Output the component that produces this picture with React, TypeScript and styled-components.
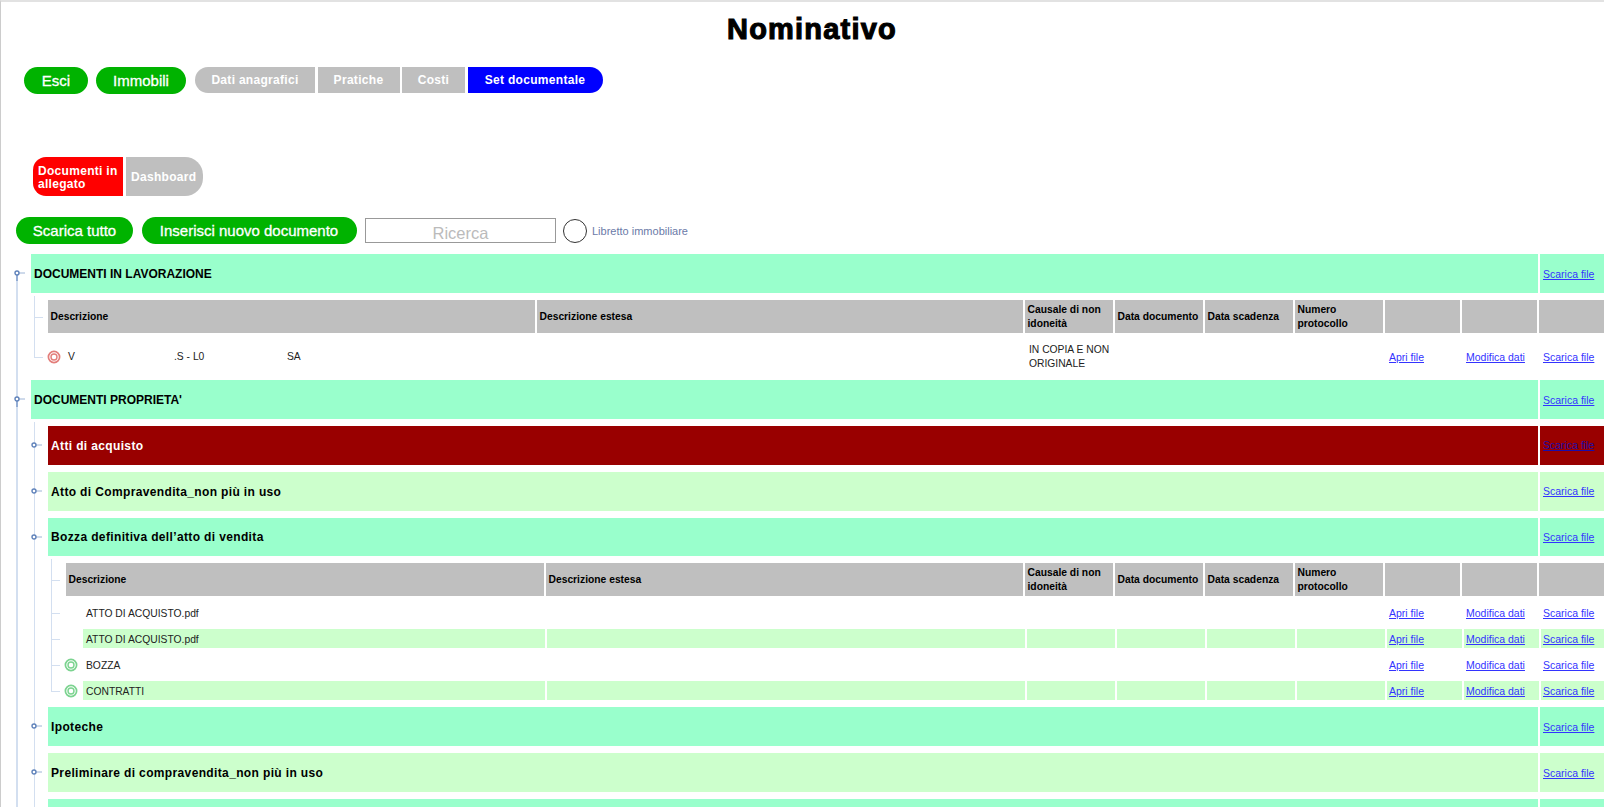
import styled, { createGlobalStyle } from "styled-components"

const GlobalStyles = createGlobalStyle`
  html, body {
    margin: 0;
    padding: 0;
    height: 807px;
    overflow: hidden;
    background: #ffffff;
    font-family: "Liberation Sans", Arial, sans-serif;
  }
  * {
    box-sizing: border-box;
  }
`

const LINE = "#d3dff0"

const Page = styled.div`
  height: 807px;
  overflow: hidden;
  border-left: 1px solid #cccccc;
  border-top: 2px solid #e2e2e2;
  position: relative;
`

const TopTab = styled.div`
  position: absolute;
  top: -2px;
  left: 503px;
  width: 146px;
  height: 2px;
  background: #ccffcc;
`

const Title = styled.h1`
  margin: 0;
  height: 65px;
  padding-top: 9px;
  padding-left: 19px;
  text-align: center;
  font-family: "Liberation Sans", Arial, sans-serif;
  font-size: 29px;
  line-height: 36px;
  font-weight: 700;
  letter-spacing: 1.2px;
  -webkit-text-stroke: 1.1px #000000;
  color: #000000;
`

const NavRow = styled.div`
  display: flex;
  align-items: flex-start;
  padding-left: 23px;
  height: 90px;
`

const GreenButton = styled.button<{ $w: number }>`
  width: ${p => p.$w}px;
  height: 27px;
  padding: 0;
  border: 0;
  border-radius: 14px;
  background: #00b300;
  color: #ffffff;
  font-family: "Liberation Sans", Arial, sans-serif;
  font-size: 15px;
  -webkit-text-stroke: 0.3px #ffffff;
  white-space: nowrap;
`

const NavGreen = styled(GreenButton)`
  margin-right: 8px;
`

const NavTabs = styled.div`
  display: flex;
  gap: 2.5px;
  margin-left: 1px;
`

const Tab = styled.div<{ $bg: string; $w: number; $first?: boolean; $last?: boolean }>`
  width: ${p => p.$w}px;
  height: 26px;
  display: flex;
  align-items: center;
  justify-content: center;
  background: ${p => p.$bg};
  color: #ffffff;
  font-size: 12px;
  font-weight: 700;
  letter-spacing: 0.3px;
  border-radius: ${p => (p.$first ? "13px 0 0 13px" : p.$last ? "0 13px 13px 0" : "0")};
`

const SubTabs = styled.div`
  display: flex;
  gap: 3px;
  padding-left: 32px;
  height: 60px;
`

const SubTab = styled.div<{ $bg: string; $w: number; $first?: boolean }>`
  width: ${p => p.$w}px;
  height: 39px;
  display: flex;
  align-items: center;
  padding: 2px 0 0 5px;
  background: ${p => p.$bg};
  color: #ffffff;
  font-size: 12px;
  line-height: 13px;
  font-weight: 700;
  letter-spacing: 0.3px;
  border-radius: ${p => (p.$first ? "13px 0 0 13px" : "0 18px 18px 0")};
`

const Toolbar = styled.div`
  display: flex;
  align-items: flex-start;
  padding-left: 15px;
  height: 37.4px;
`

const ToolButton = styled(GreenButton)`
  margin-right: 8.5px;
`

const Search = styled.div`
  width: 191px;
  height: 25px;
  margin-top: 1px;
  margin-right: 7px;
  border: 1px solid #999999;
  display: flex;
  align-items: center;
  justify-content: center;
  padding-top: 5px;
  color: #bbbbbb;
  font-size: 16.5px;
`

const RoundCheck = styled.span`
  width: 24px;
  height: 24px;
  margin-top: 2px;
  margin-right: 5px;
  border: 1px solid #333333;
  border-radius: 50%;
`

const CheckLabel = styled.span`
  margin-top: 7px;
  font-size: 11px;
  line-height: 14px;
  color: #6b7aa8;
`

const Tree = styled.div`
  display: flex;
  flex-direction: column;
  gap: 7px;
  position: relative;
  &::before {
    content: "";
    position: absolute;
    left: 15px;
    top: 20px;
    bottom: -40px;
    width: 2px;
    background: ${LINE};
  }
`

const Nested = styled.div<{ $left: number; $stop: number }>`
  display: flex;
  flex-direction: column;
  gap: 7px;
  position: relative;
  &::before {
    content: "";
    position: absolute;
    left: ${p => p.$left}px;
    top: -4px;
    bottom: ${p => p.$stop}px;
    width: 1px;
    background: ${LINE};
  }
`

const GroupRow = styled.div<{ $indent: number }>`
  display: flex;
  gap: 2px;
  height: 38.8px;
  flex: none;
  padding-left: ${p => p.$indent}px;
  position: relative;
`

const GroupTitle = styled.div<{ $bg: string; $light?: boolean; $big?: boolean }>`
  flex: 1;
  display: flex;
  align-items: center;
  padding: 1px 0 0 3px;
  background: ${p => p.$bg};
  color: ${p => (p.$light ? "#ffffff" : "#000000")};
  font-size: 12px;
  font-weight: 700;
  letter-spacing: ${p => (p.$big ? "0" : "0.36px")};
`

const GroupLink = styled.div<{ $bg: string }>`
  width: 64px;
  flex: none;
  display: flex;
  align-items: center;
  padding-left: 3px;
  background: ${p => p.$bg};
`

const FileLink = styled.a<{ $dark?: boolean }>`
  color: ${p => (p.$dark ? "#1a0dab" : "#3333ff")};
  text-decoration: underline;
  font-size: 10.5px;
  white-space: nowrap;
`

const Expander = styled.svg<{ $x: number }>`
  position: absolute;
  left: ${p => p.$x}px;
  top: 15px;
`

const Grid = styled.div<{ $cols: string; $h: number; $indent: number }>`
  display: grid;
  grid-template-columns: ${p => p.$cols};
  column-gap: 2px;
  height: ${p => p.$h}px;
  flex: none;
  margin-left: ${p => p.$indent}px;
  position: relative;
  font-size: 10.3px;
  color: #222222;
`

const HeadCell = styled.div`
  display: flex;
  align-items: center;
  padding: 0 2.5px;
  background: #bfbfbf;
  color: #000000;
  font-size: 10.3px;
  font-weight: 700;
  line-height: 14px;
`

const Cell = styled.div<{ $bg?: boolean; $pad?: number }>`
  display: flex;
  align-items: center;
  padding-left: ${p => p.$pad ?? 2}px;
  background: ${p => (p.$bg ? "#ccffcc" : "transparent")};
  line-height: 14px;
`

const TextCell = styled(Cell)`
  padding-top: 1.5px;
`

const NamePart = styled.span<{ $w: number }>`
  width: ${p => p.$w}px;
  flex: none;
`

const Tick = styled.span<{ $x: number }>`
  position: absolute;
  left: ${p => p.$x}px;
  top: 50%;
  width: 9px;
  height: 1px;
  background: ${LINE};
`

const RingIcon = styled.svg<{ $x: number }>`
  position: absolute;
  left: ${p => p.$x}px;
  top: 50%;
  margin-top: -7px;
`

const DocIcon = ({ color, x }: { color: string; x: number }) => (
  <RingIcon $x={x} width="14" height="14" viewBox="0 0 14 14">
    <circle cx="7" cy="7" r="5.6" fill="none" stroke={color} strokeWidth="1.7" opacity="0.75" />
    <circle cx="7" cy="7" r="3" fill="none" stroke={color} strokeWidth="1.4" opacity="0.75" />
  </RingIcon>
)

const Knob = ({ x, down }: { x: number; down?: boolean }) => (
  <Expander $x={x} width="12" height="12" viewBox="0 0 12 12">
    {down && <line x1="3" y1="5" x2="3" y2="12" stroke="#7f9ccb" strokeWidth="1.5" />}
    <line x1="5" y1="4" x2="11" y2="4" stroke="#9db4d6" />
    <circle cx="3" cy="4" r="2" fill="#ffffff" stroke="#5f82ba" strokeWidth="1.4" />
  </Expander>
)

const COLS_L1 = "487px 486px 88px 88px 88px 88px 75px 75px 65px"
const COLS_L2 = "478px 477px 88px 88px 88px 88px 75px 75px 65px"
const COLS_ROW = "16px 462px 478px 88px 88px 88px 88px 75px 75px 65px"

const HEADS = [
  "Descrizione",
  "Descrizione estesa",
  "Causale di non idoneità",
  "Data documento",
  "Data scadenza",
  "Numero protocollo",
  "",
  "",
  "",
]

const Header = ({ cols, indent, tick }: { cols: string; indent: number; tick: number }) => (
  <Grid $cols={cols} $h={33} $indent={indent}>
    <Tick $x={tick - indent} />
    {HEADS.map((h, i) => (
      <HeadCell key={i}>{h}</HeadCell>
    ))}
  </Grid>
)

const Links = ({ bg, pad }: { bg?: boolean; pad: number }) => (
  <>
    <Cell $bg={bg} $pad={pad}><FileLink href="#">Apri file</FileLink></Cell>
    <Cell $bg={bg} $pad={pad}><FileLink href="#">Modifica dati</FileLink></Cell>
    <Cell $bg={bg} $pad={pad}><FileLink href="#">Scarica file</FileLink></Cell>
  </>
)

const DocRow = ({ name, bg, icon }: { name: string; bg?: boolean; icon?: boolean }) => (
  <Grid $cols={COLS_ROW} $h={19} $indent={64}>
    <Tick $x={-14} />
    {icon && <DocIcon color="#4fc46a" x={-1} />}
    <Cell />
    <TextCell $bg={bg} $pad={3}>{name}</TextCell>
    <Cell $bg={bg} />
    <Cell $bg={bg} />
    <Cell $bg={bg} />
    <Cell $bg={bg} />
    <Cell $bg={bg} />
    <Links bg={bg} pad={2} />
  </Grid>
)

const Group = ({
  title,
  bg,
  indent,
  light,
  big,
  noLink,
}: {
  title?: string
  bg: string
  indent: number
  light?: boolean
  big?: boolean
  noLink?: boolean
}) => (
  <GroupRow $indent={indent}>
    <Knob x={big ? 13 : 30} down={big} />
    <GroupTitle $bg={bg} $light={light} $big={big}>{title}</GroupTitle>
    <GroupLink $bg={bg}>
      {!noLink && <FileLink href="#" $dark={light}>Scarica file</FileLink>}
    </GroupLink>
  </GroupRow>
)

export default function App() {
  return (
    <Page>
      <GlobalStyles />
      <TopTab />
      <Title>Nominativo</Title>
      <NavRow>
        <NavGreen $w={64}>Esci</NavGreen>
        <NavGreen $w={90}>Immobili</NavGreen>
        <NavTabs>
          <Tab $bg="#bfbfbf" $w={120} $first>Dati anagrafici</Tab>
          <Tab $bg="#bfbfbf" $w={82}>Pratiche</Tab>
          <Tab $bg="#bfbfbf" $w={63}>Costi</Tab>
          <Tab $bg="#0000ff" $w={135} $last>Set documentale</Tab>
        </NavTabs>
      </NavRow>
      <SubTabs>
        <SubTab $bg="#ff0000" $w={90} $first>Documenti in allegato</SubTab>
        <SubTab $bg="#bfbfbf" $w={77}>Dashboard</SubTab>
      </SubTabs>
      <Toolbar>
        <ToolButton $w={117}>Scarica tutto</ToolButton>
        <ToolButton $w={215}>Inserisci nuovo documento</ToolButton>
        <Search>Ricerca</Search>
        <RoundCheck />
        <CheckLabel>Libretto immobiliare</CheckLabel>
      </Toolbar>
      <Tree>
        <Group title="DOCUMENTI IN LAVORAZIONE" bg="#99ffcc" indent={30} big />
        <Nested $left={33} $stop={16}>
          <Header cols={COLS_L1} indent={47} tick={33} />
          <Grid $cols={COLS_L1} $h={33} $indent={47}>
            <Tick $x={-14} />
            <DocIcon color="#d9534f" x={-1} />
            <TextCell $pad={20}>
              <NamePart $w={106}>V</NamePart>
              <NamePart $w={113}>.S - L0</NamePart>
              <span>SA</span>
            </TextCell>
            <Cell />
            <TextCell $pad={4}>IN COPIA E NON ORIGINALE</TextCell>
            <Cell /><Cell /><Cell />
            <Links pad={4} />
          </Grid>
        </Nested>
        <Group title="DOCUMENTI PROPRIETA'" bg="#99ffcc" indent={30} big />
        <Nested $left={33} $stop={-40}>
          <Group title="Atti di acquisto" bg="#990000" indent={47} light />
          <Group title="Atto di Compravendita_non più in uso" bg="#ccffcc" indent={47} />
          <Group title="Bozza definitiva dell’atto di vendita" bg="#99ffcc" indent={47} />
          <Nested $left={50} $stop={9}>
            <Header cols={COLS_L2} indent={65} tick={50} />
            <DocRow name="ATTO DI ACQUISTO.pdf" />
            <DocRow name="ATTO DI ACQUISTO.pdf" bg />
            <DocRow name="BOZZA" icon />
            <DocRow name="CONTRATTI" bg icon />
          </Nested>
          <Group title="Ipoteche" bg="#99ffcc" indent={47} />
          <Group title="Preliminare di compravendita_non più in uso" bg="#ccffcc" indent={47} />
          <Group bg="#99ffcc" indent={47} noLink />
        </Nested>
      </Tree>
    </Page>
  )
}
